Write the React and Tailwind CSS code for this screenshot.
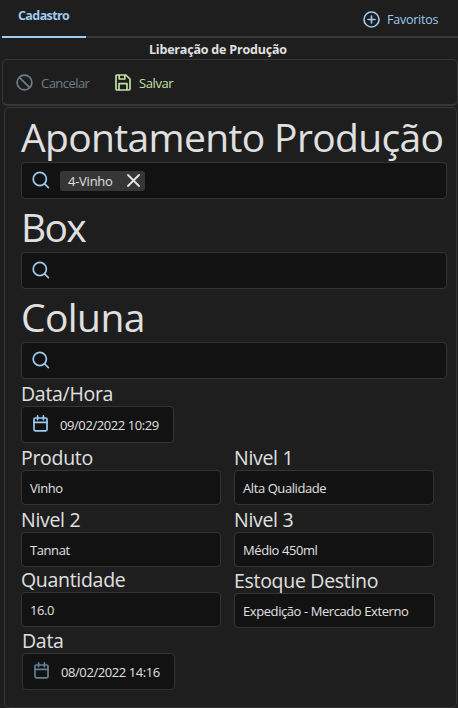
import React from "react";

function SearchIcon() {
  return (
    <svg className="-mt-[2px] h-[18px] w-[18px] shrink-0" viewBox="0 0 18 18" fill="none" stroke="#9ccbf0" strokeWidth="1.7" strokeLinecap="round">
      <circle cx="7.8" cy="8" r="6.6" />
      <path d="M12.6 12.8L16.4 16.6" />
    </svg>
  );
}

function CalendarIcon({ className }) {
  return (
    <svg className={"-mt-[2px] h-[17px] w-[16px] shrink-0 " + className} viewBox="0 0 16 17" fill="none" stroke="currentColor" strokeWidth="1.7" strokeLinecap="round" strokeLinejoin="round">
      <rect x="1" y="3" width="13" height="12.8" rx="1.2" />
      <path d="M1 7.4H14M4.6 0.9V4.6M10.4 0.9V4.6" />
    </svg>
  );
}

function Heading({ children, className = "tracking-[-0.65px]" }) {
  return <div className={"h-[50px] whitespace-nowrap text-[39px] leading-[50px] " + className}>{children}</div>;
}

function Label({ children }) {
  return <div className="h-[25px] whitespace-nowrap text-[19.5px] leading-[26px] tracking-[-0.3px]">{children}</div>;
}

const box = "flex items-center rounded-[4px] border border-[#343434] bg-[#121212] whitespace-nowrap ";

function SearchBox({ children }) {
  return (
    <div className={box + "h-[37px] w-[426px] pl-[10px]"}>
      <SearchIcon />
      {children}
    </div>
  );
}

function DateBox({ value, iconClass }) {
  return (
    <div className={box + "h-[37px] w-[153px] pl-[11px] text-[13px]"}>
      <CalendarIcon className={iconClass} />
      <span className="ml-[11px] pt-[2px] font-medium tracking-[-0.42px]">{value}</span>
    </div>
  );
}

function Field({ label, value, className = "w-[200px]" }) {
  return (
    <div>
      <Label>{label}</Label>
      <div className={box + "h-[35px] pt-[2px] pl-2 text-[13px] " + className}>
        <span className="tracking-[-0.42px]">{value}</span>
      </div>
    </div>
  );
}

export default function App() {
  return (
    <div className="flex h-[708px] w-[458px] flex-col overflow-hidden bg-[#1e1e1e] font-['Open_Sans','Noto_Sans',sans-serif] text-[#e0e0e0]">
      <header className="ml-[2px] flex h-[38px] shrink-0 justify-between border-b-2 border-[#383838] text-[12.5px]">
        <div className="h-[38px] w-[84px] border-b-2 border-[#a3cdec] pt-[5px] pl-[16px] leading-[21px] font-bold tracking-[-0.6px] text-[#a0caee]">
          Cadastro
        </div>
        <div className="flex h-[38px] w-[95px] items-center gap-[7px] text-[#9ccbf0]">
          <svg className="h-[17px] w-[17px] shrink-0" viewBox="0 0 17 17" fill="none" stroke="currentColor" strokeWidth="1.6" strokeLinecap="round">
            <circle cx="8.5" cy="8.5" r="7.5" />
            <path d="M8.5 5V12M5 8.5H12" />
          </svg>
          <span className="pt-[2px] tracking-[-0.25px]">Favoritos</span>
        </div>
      </header>

      <h1 className="h-[21px] shrink-0 pl-[149px] text-[12.5px] leading-[23px] font-bold tracking-[-0.2px] whitespace-nowrap">
        Liberação de Produção
      </h1>

      <div className="ml-[2px] flex h-[47px] w-[456px] shrink-0 items-center rounded-[5px] border border-b-2 border-[#363636] pl-[13px] text-[13px]">
        <div className="flex w-[99px] items-center gap-[8px] text-[#6f7f85]">
          <svg className="h-[17px] w-[17px] shrink-0" viewBox="0 0 17 17" fill="none" stroke="currentColor" strokeWidth="1.7">
            <circle cx="8.5" cy="8.5" r="7.4" />
            <path d="M3.3 3.3L13.7 13.7" />
          </svg>
          <span className="pt-[3px] tracking-[-0.55px]">Cancelar</span>
        </div>
        <div className="flex items-center gap-[8px] text-[#c5e1a5]">
          <svg className="h-[17px] w-[16px] shrink-0" viewBox="0 0 16 17" fill="none" stroke="currentColor" strokeWidth="1.7" strokeLinejoin="round">
            <path d="M2 1H10.8L15 5V14.8Q15 16 13.8 16H2.2Q1 16 1 14.8V2Q1 1 2 1Z" />
            <path d="M4 16V9.6H12V16M4.2 1V5H9.8V1" />
          </svg>
          <span className="pt-[3px] tracking-[-0.4px]">Salvar</span>
        </div>
      </div>

      <main className="mt-[1px] ml-[4px] h-[601px] w-[453px] shrink-0 rounded-[5px] border border-[#363636] pt-[4px] pl-[16px]">
        <Heading>Apontamento Produção</Heading>
        <SearchBox>
          <div className="ml-[10px] flex h-[20px] w-[85px] items-center justify-between rounded-[3px] bg-[#363636] pr-[5px] pl-[8px] text-[13px]">
            <span className="pt-[2px] tracking-[-0.25px]">4-Vinho</span>
            <svg className="h-[13px] w-[13px]" viewBox="0 0 13 13" fill="none" stroke="#e4e4e4" strokeWidth="1.8" strokeLinecap="round">
              <path d="M1 1L12 12M12 1L1 12" />
            </svg>
          </div>
        </SearchBox>
        <div className="h-[3px]" />
        <Heading className="tracking-[-1.7px]">Box</Heading>
        <SearchBox />
        <div className="h-[3px]" />
        <Heading className="tracking-[-0.6px]">Coluna</Heading>
        <SearchBox />

        <div className="h-[2px]" />
        <Label>Data/Hora</Label>
        <DateBox value="09/02/2022 10:29" iconClass="text-[#9ccbf0]" />

        <div className="mt-[2px] flex gap-[13px]">
          <div className="flex flex-col">
            <Field label="Produto" value="Vinho" />
            <div className="h-[2px]" />
            <Field label="Nivel 2" value="Tannat" />
            <Field label="Quantidade" value="16.0" />
          </div>
          <div className="flex flex-col">
            <Field label="Nivel 1" value="Alta Qualidade" />
            <div className="h-[2px]" />
            <Field label="Nivel 3" value="Médio 450ml" />
            <div className="h-[1px]" />
            <Field label="Estoque Destino" value="Expedição - Mercado Externo" className="w-[201px]" />
          </div>
        </div>

        <div className="ml-[1px]">
          <Label>Data</Label>
          <DateBox value="08/02/2022 14:16" iconClass="text-[#607f96]" />
        </div>
      </main>
    </div>
  );
}
